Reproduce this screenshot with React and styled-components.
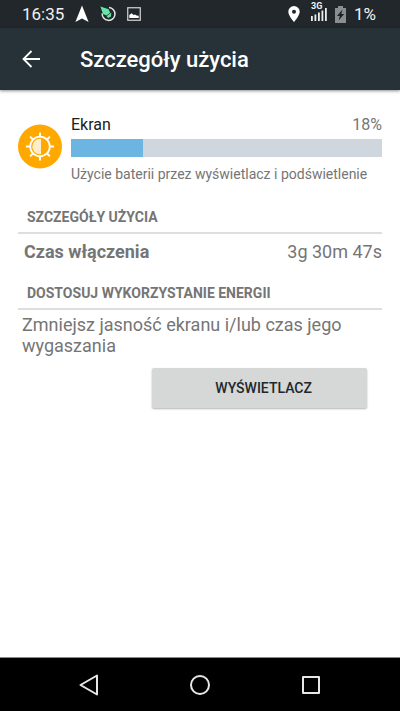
import React from 'react';
import styled, { createGlobalStyle } from 'styled-components';

const GlobalStyle = createGlobalStyle`
    *{ box-sizing: border-box; margin: 0; padding: 0; }

    body{
        background: #fff; color: #757575;
        font-family: Roboto, 'Noto Sans', sans-serif;
    }

    svg{ display: block; flex-shrink: 0; }
`;

const StyledScreen = styled.div`
    min-height: 100vh;
    display: flex; flex-direction: column;
`;

const StatusBar = styled.div`
    display: flex; justify-content: space-between; align-items: center;
    height: 28px; padding: 0 24px 0 22px;
    background: #21272b; color: #f0f2f2;
    font-size: 17px; line-height: 28px;
`;

const StatusGroup = styled.div`
    display: flex; align-items: center;
    gap: ${({$gap}) => $gap};
`;

const AppBar = styled.header`
    display: flex; align-items: center; gap: 38px;
    height: 62px; padding: 0 20px;
    background: #263238; color: #fff;
    box-shadow: 0 1px 3px rgba(0, 0, 0, 0.45);

    h1{ font-weight: 500; font-size: 22px; line-height: 28px; padding-top: 2px; }
`;

const IconButton = styled.button`
    display: flex; align-items: center; justify-content: center;
    background: none; border: none; color: inherit;
    cursor: pointer;
`;

const Content = styled.main`
    flex: 1;
    padding: 24px 18px;
`;

const UsageHeader = styled.section`
    display: flex; gap: 9px;

    > svg{ margin-top: 10px; }
`;

const UsageInfo = styled.div`
    flex: 1; min-width: 0;

    p{ font-size: 14px; line-height: 20px; margin-top: 7px; }
`;

const UsageTitle = styled.div`
    display: flex; justify-content: space-between;
    font-size: 16px; line-height: 22px;

    h2{ font-weight: 400; font-size: 16px; color: #212121; }
`;

const Track = styled.div`
    height: 18px; margin-top: 3px;
    background: #cfd6dd;
`;

const Fill = styled.div`
    height: 100%;
    background: #6cb5e3;
`;

const SectionTitle = styled.h3`
    font-weight: 700; font-size: 14px; line-height: 20px;
    padding: 0 9px 5px;
    margin-top: ${({$top}) => $top};
    border-bottom: 2px solid #dedede;
`;

const DetailList = styled.dl`
    display: flex; justify-content: space-between;
    padding: 6px 0 0 6px;
    font-size: 18px; line-height: 24px;

    dt{ font-weight: 700; }
`;

const Hint = styled.p`
    padding: 4px 4px 0;
    font-size: 18px; line-height: 21px;
`;

const ActionButton = styled.button`
    display: block;
    width: 59%; height: 40px;
    padding-left: 8px;
    margin: 12px 15px 0 auto;
    background: #d6d7d7; color: #20282c;
    border: none; border-radius: 2px;
    box-shadow: 0 1px 2px rgba(0, 0, 0, 0.3);
    font-family: inherit; font-weight: 500; font-size: 14px;
    cursor: pointer;
`;

const NavBar = styled.nav`
    display: flex; justify-content: center; gap: 63px;
    height: 54px;
    background: #000; color: #e6e8e8;
    border-top: 1px solid #8a8a8a;

    button{ width: 48px; }
`;

const NavigationIcon = () => (
    <svg width="14" height="18" viewBox="0 0 14 18" fill="#fff">
        <path d="M7 .5 13.6 17 7 13.6.4 17z" />
    </svg>
);

const TrackerIcon = () => (
    <svg width="16" height="16" viewBox="0 0 16 16" fill="none">
        <path d="M9 1.6A6.4 6.4 0 1 1 2.2 7.4" stroke="#e4e8e8" strokeWidth="1.5" />
        <path d="M.4.4 8.6 3.2 10.2 6.8 6.6 9.4 3 8z" fill="#63e6a6" />
        <path d="M6.6 10.2 11.4 6.6 10.9 10.4 8.2 12z" fill="#63e6a6" />
    </svg>
);

const ImageIcon = () => (
    <svg width="14" height="14" viewBox="0 0 14 14" fill="none">
        <rect x=".75" y=".75" width="12.5" height="12.5" stroke="#d5d8d9" strokeWidth="1.2" />
        <path d="M2.3 11V8L4.6 6.2 6.6 8 8 7.4 9.6 8.4 11.7 8.8V11z" fill="#fff" />
    </svg>
);

const PinIcon = () => (
    <svg width="12" height="16" viewBox="0 0 12 16" fill="#fff">
        <path fillRule="evenodd" d="M6 0A5.7 5.7 0 0 0 .3 5.7C.3 9.8 6 16 6 16s5.7-6.2 5.7-10.3A5.7 5.7 0 0 0 6 0zm0 3.7a2 2 0 1 1 0 4 2 2 0 0 1 0-4z" />
    </svg>
);

const Signal = styled.div`
    display: flex; flex-direction: column;
    width: 16px; height: 26px;
    margin-left: 3px;
    font-weight: 700; font-size: 9px; line-height: 10px;

    svg{ margin-top: -3px; }
`;

const SignalIcon = () => (
    <Signal>
        <span>3G</span>
        <svg width="16" height="13" viewBox="0 0 16 13" fill="#eceeee">
            <path d="M0 8h1.8v5H0zM3.5 6.5h1.8V13H3.5zM7 4.5h1.8V13H7zM10.5 2.5h1.8V13h-1.8zM14 0h1.8v13H14z" />
        </svg>
    </Signal>
);

const BatteryIcon = () => (
    <svg width="11" height="17" viewBox="0 0 11 17">
        <path d="M3 0h5v2h3v15H0V2h3z" fill="#8b8e90" />
        <path d="M7.5 3.5 2 10h2.8L3.600 14.5 9.2 8H6.3z" fill="#1c2225" />
    </svg>
);

const BackArrow = () => (
    <svg width="22" height="18" viewBox="0 0 22 18" fill="none" stroke="#fff" strokeWidth="1.8">
        <path d="M20 9H4M11.5 1 3.5 9l8 8" />
    </svg>
);

const RAYS = [0, 45, 90, 135, 180, 225, 270, 315];

const BrightnessIcon = () => (
    <svg width="44" height="45" viewBox="0 0 44 45">
        <circle cx="22" cy="22.5" r="22" fill="#ffa800" />
        <circle cx="22" cy="22.5" r="9.8" fill="none" stroke="#fff" strokeWidth="1.8" />
        <path d="M23 14.8h-1a7.7 7.7 0 0 0 0 15.4h1z" fill="#fff" fillOpacity=".8" />
        {RAYS.map(angle => (
            <path key={angle} d="M22 8.5V12.5" stroke="#fff" strokeWidth="2" transform={`rotate(${angle} 22 22.5)`} />
        ))}
    </svg>
);

const App = () => {

    const usage = 18;
    const scale = 78;

    return (
        <>
            <GlobalStyle />
            <StyledScreen>
                <StatusBar>
                    <StatusGroup $gap="11px">
                        <time>16:35</time>
                        <NavigationIcon />
                        <TrackerIcon />
                        <ImageIcon />
                    </StatusGroup>
                    <StatusGroup $gap="8px">
                        <PinIcon />
                        <SignalIcon />
                        <BatteryIcon />
                        <span>1%</span>
                    </StatusGroup>
                </StatusBar>

                <AppBar>
                    <IconButton aria-label="Wstecz"><BackArrow /></IconButton>
                    <h1>Szczegóły użycia</h1>
                </AppBar>

                <Content>
                    <UsageHeader>
                        <BrightnessIcon />
                        <UsageInfo>
                            <UsageTitle>
                                <h2>Ekran</h2>
                                <span>{usage}%</span>
                            </UsageTitle>
                            <Track>
                                <Fill style={{ width: `${usage / scale * 100}%` }} />
                            </Track>
                            <p>Użycie baterii przez wyświetlacz i podświetlenie</p>
                        </UsageInfo>
                    </UsageHeader>

                    <SectionTitle $top="23px">SZCZEGÓŁY UŻYCIA</SectionTitle>
                    <DetailList>
                        <dt>Czas włączenia</dt>
                        <dd>3g 30m 47s</dd>
                    </DetailList>

                    <SectionTitle $top="19px">DOSTOSUJ WYKORZYSTANIE ENERGII</SectionTitle>
                    <Hint>Zmniejsz jasność ekranu i/lub czas jego wygaszania</Hint>
                    <ActionButton>WYŚWIETLACZ</ActionButton>
                </Content>

                <NavBar>
                    <IconButton aria-label="Cofnij">
                        <svg width="20" height="22" viewBox="0 0 20 22" fill="none" stroke="currentColor" strokeWidth="2" strokeLinejoin="round">
                            <path d="M18 1.5V20.5L1.5 11z" />
                        </svg>
                    </IconButton>
                    <IconButton aria-label="Ekran główny">
                        <svg width="20" height="20" viewBox="0 0 20 20" fill="none" stroke="currentColor" strokeWidth="2">
                            <circle cx="10" cy="10" r="9" />
                        </svg>
                    </IconButton>
                    <IconButton aria-label="Ostatnie aplikacje">
                        <svg width="18" height="18" viewBox="0 0 18 18" fill="none" stroke="currentColor" strokeWidth="2" strokeLinejoin="round">
                            <rect x="1" y="1" width="16" height="16" />
                        </svg>
                    </IconButton>
                </NavBar>
            </StyledScreen>
        </>
    );
}

export default App;
